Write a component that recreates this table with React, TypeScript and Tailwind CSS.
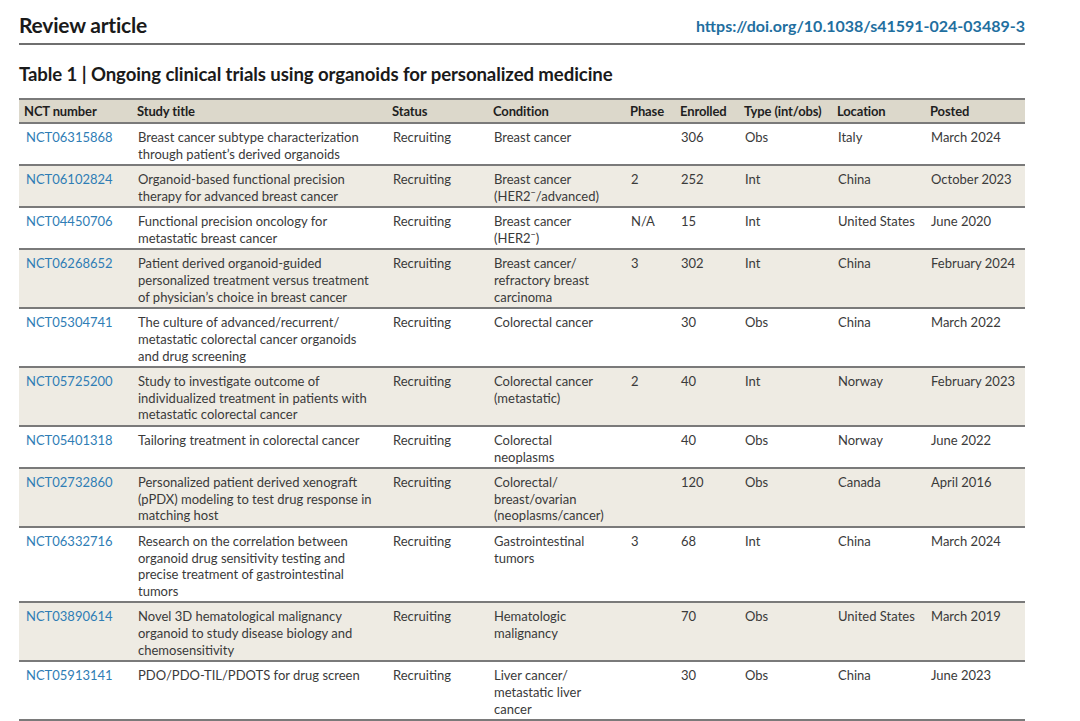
import React from 'react'

interface Trial {
  nct: string
  title: string[]
  condition: React.ReactNode[]
  phase: string
  enrolled: string
  type: string
  location: string
  posted: string
}

const Her2 = () => (
  <>
    HER2<sup className="text-[9px] relative -top-[5px]">−</sup>
  </>
)

const trials: Trial[] = [
  {
    nct: 'NCT06315868',
    title: ['Breast cancer subtype characterization', 'through patient’s derived organoids'],
    condition: ['Breast cancer'],
    phase: '',
    enrolled: '306',
    type: 'Obs',
    location: 'Italy',
    posted: 'March 2024',
  },
  {
    nct: 'NCT06102824',
    title: ['Organoid-based functional precision', 'therapy for advanced breast cancer'],
    condition: ['Breast cancer', <>(<Her2 />/advanced)</>],
    phase: '2',
    enrolled: '252',
    type: 'Int',
    location: 'China',
    posted: 'October 2023',
  },
  {
    nct: 'NCT04450706',
    title: ['Functional precision oncology for', 'metastatic breast cancer'],
    condition: ['Breast cancer', <>(<Her2 />)</>],
    phase: 'N/A',
    enrolled: '15',
    type: 'Int',
    location: 'United States',
    posted: 'June 2020',
  },
  {
    nct: 'NCT06268652',
    title: [
      'Patient derived organoid-guided',
      'personalized treatment versus treatment',
      'of physician’s choice in breast cancer',
    ],
    condition: ['Breast cancer/', 'refractory breast', 'carcinoma'],
    phase: '3',
    enrolled: '302',
    type: 'Int',
    location: 'China',
    posted: 'February 2024',
  },
  {
    nct: 'NCT05304741',
    title: [
      'The culture of advanced/recurrent/',
      'metastatic colorectal cancer organoids',
      'and drug screening',
    ],
    condition: ['Colorectal cancer'],
    phase: '',
    enrolled: '30',
    type: 'Obs',
    location: 'China',
    posted: 'March 2022',
  },
  {
    nct: 'NCT05725200',
    title: [
      'Study to investigate outcome of',
      'individualized treatment in patients with',
      'metastatic colorectal cancer',
    ],
    condition: ['Colorectal cancer', '(metastatic)'],
    phase: '2',
    enrolled: '40',
    type: 'Int',
    location: 'Norway',
    posted: 'February 2023',
  },
  {
    nct: 'NCT05401318',
    title: ['Tailoring treatment in colorectal cancer'],
    condition: ['Colorectal', 'neoplasms'],
    phase: '',
    enrolled: '40',
    type: 'Obs',
    location: 'Norway',
    posted: 'June 2022',
  },
  {
    nct: 'NCT02732860',
    title: [
      'Personalized patient derived xenograft',
      '(pPDX) modeling to test drug response in',
      'matching host',
    ],
    condition: ['Colorectal/', 'breast/ovarian', '(neoplasms/cancer)'],
    phase: '',
    enrolled: '120',
    type: 'Obs',
    location: 'Canada',
    posted: 'April 2016',
  },
  {
    nct: 'NCT06332716',
    title: [
      'Research on the correlation between',
      'organoid drug sensitivity testing and',
      'precise treatment of gastrointestinal',
      'tumors',
    ],
    condition: ['Gastrointestinal', 'tumors'],
    phase: '3',
    enrolled: '68',
    type: 'Int',
    location: 'China',
    posted: 'March 2024',
  },
  {
    nct: 'NCT03890614',
    title: [
      'Novel 3D hematological malignancy',
      'organoid to study disease biology and',
      'chemosensitivity',
    ],
    condition: ['Hematologic', 'malignancy'],
    phase: '',
    enrolled: '70',
    type: 'Obs',
    location: 'United States',
    posted: 'March 2019',
  },
  {
    nct: 'NCT05913141',
    title: ['PDO/PDO-TIL/PDOTS for drug screen'],
    condition: ['Liver cancer/', 'metastatic liver', 'cancer'],
    phase: '',
    enrolled: '30',
    type: 'Obs',
    location: 'China',
    posted: 'June 2023',
  },
]

const headers = [
  'NCT number',
  'Study title',
  'Status',
  'Condition',
  'Phase',
  'Enrolled',
  'Type (int/obs)',
  'Location',
  'Posted',
]

const widths = ['w-[113px]', 'w-[255px]', 'w-[101px]', 'w-[137px]', 'w-[50px]', 'w-[64px]', 'w-[93px]', 'w-[93px]', 'w-[100px]']

function Lines({ items }: { items: React.ReactNode[] }) {
  return (
    <>
      {items.map((line, i) => (
        <div key={i} className="whitespace-nowrap">
          {line}
        </div>
      ))}
    </>
  )
}

export default function App() {
  return (
    <div className="w-[1080px] h-[721px] overflow-hidden bg-white font-['Lato',sans-serif] text-[#3a3a3a]">
      <div className="ml-[19px] w-[1006px]">
        {/* Header */}
        <div className="flex justify-between items-end h-[45px] pb-[7px] border-b-2 border-[#6f6f6f]">
          <h1 className="text-[21px] font-bold text-[#1a1a1a] leading-none tracking-[-0.01em] mb-[1px]">
            Review article
          </h1>
          <a className="text-[16px] font-bold text-[#1f6f9f] leading-none mb-[2px]">
            https://doi.org/10.1038/s41591-024-03489-3
          </a>
        </div>

        <h2 className="mt-[19px] text-[18.6px] font-bold text-[#1a1a1a] leading-[20px] tracking-[-0.005em]">
          Table 1 | Ongoing clinical trials using organoids for personalized medicine
        </h2>

        {/* Table */}
        <table className="mt-[14px] w-full table-fixed border-collapse text-[13px]">
          <colgroup>
            {widths.map((w, i) => (
              <col key={i} className={w} />
            ))}
          </colgroup>
          <thead>
            <tr className="bg-[#dcd8cb] border-y-2 border-[#7a7a7a]">
              {headers.map((h) => (
                <th
                  key={h}
                  className="text-left font-bold text-[#1f1f1f] whitespace-nowrap pl-[5px] pr-0 h-[24px] leading-[17px] tracking-[-0.01em]"
                >
                  {h}
                </th>
              ))}
            </tr>
          </thead>
          <tbody>
            {trials.map((t, i) => (
              <tr
                key={t.nct}
                className={`align-top border-b-2 border-[#7a7a7a] leading-[16.75px] ${i % 2 === 1 ? 'bg-[#eeebe3]' : 'bg-white'}`}
              >
                <td className="pl-[7px] pt-[5px] pb-[1.6px] text-[#2f7db5]">{t.nct}</td>
                <td className="pl-[6px] pt-[5px] pb-[1.6px]">
                  <Lines items={t.title} />
                </td>
                <td className="pl-[6px] pt-[5px] pb-[1.6px]">Recruiting</td>
                <td className="pl-[6px] pt-[5px] pb-[1.6px]">
                  <Lines items={t.condition} />
                </td>
                <td className="pl-[6px] pt-[5px] pb-[1.6px]">{t.phase}</td>
                <td className="pl-[6px] pt-[5px] pb-[1.6px]">{t.enrolled}</td>
                <td className="pl-[6px] pt-[5px] pb-[1.6px]">{t.type}</td>
                <td className="pl-[6px] pt-[5px] pb-[1.6px] whitespace-nowrap">{t.location}</td>
                <td className="pl-[6px] pt-[5px] pb-[1.6px] whitespace-nowrap">{t.posted}</td>
              </tr>
            ))}
          </tbody>
        </table>
      </div>
    </div>
  )
}
